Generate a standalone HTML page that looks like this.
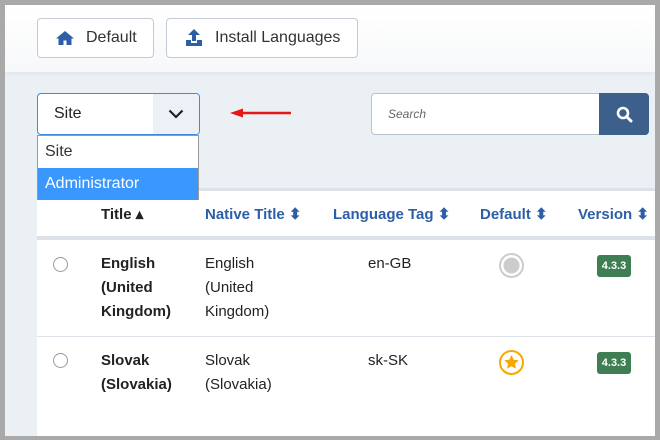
<!DOCTYPE html>
<html><head><style>
*{box-sizing:border-box;margin:0;padding:0}
body{width:660px;height:440px;background:#a9a9a9;font-family:"Liberation Sans",sans-serif;position:relative;overflow:hidden}
.frame{position:absolute;left:5px;top:5px;width:650px;height:431px;background:#ebf0f5;overflow:hidden}
.top{position:absolute;left:0;top:0;width:650px;height:67px;background:linear-gradient(#fff,#f7f8fa);box-shadow:0 2px 4px rgba(0,0,0,.04)}
.btn{position:absolute;top:13px;height:40px;border:1px solid #c3cad4;border-radius:4px;background:#fff;color:#333;font-size:16px;line-height:38px}
.sel{position:absolute;left:32px;top:88px;width:163px;height:42px;border:1px solid #3d8be0;border-radius:4px;background:#fff;font-size:16px;line-height:40px;padding-left:16px;color:#222;overflow:hidden}
.sel .ar{position:absolute;right:0;top:0;width:46px;height:40px;background:#edf1f7}
.dd{position:absolute;left:32px;top:130px;width:162px;height:65px;border:1px solid #999;background:#fff;font-size:16px;z-index:3}
.dd div{height:32px;line-height:32px;padding-left:7px;color:#333}
.dd .hl{background:#3a97fe;color:#fff}
.search{position:absolute;left:366px;top:88px;width:229px;height:42px;border:1px solid #b8c3d2;border-radius:4px 0 0 4px;background:#fff;font-style:italic;font-size:12px;color:#666;line-height:40px;padding-left:16px}
.sbtn{position:absolute;left:594px;top:88px;width:50px;height:42px;background:#3c5f8c;border-radius:0 4px 4px 0}
.table{position:absolute;left:32px;top:183px;width:618px;height:260px;background:#fff;border-top:3px solid #dde2e8}
.th{position:absolute;top:14px;font-weight:bold;font-size:15px;color:#2c5fa8}
.hsep{position:absolute;left:0;top:45px;width:618px;height:4px;background:#dde2e8}
.rsep{position:absolute;left:0;top:145px;width:618px;height:1px;background:#dde2e8}
.td{position:absolute;font-size:15px;color:#222;line-height:24px}
.b{font-weight:bold}
.radio{position:absolute;left:16px;width:15px;height:15px;border:1px solid #999;border-radius:50%}
.badge{position:absolute;left:560px;width:34px;height:22px;background:#3f7d52;border-radius:3px;color:#fff;font-size:11px;font-weight:bold;text-align:center;line-height:22px}
</style></head><body>
<div class="frame">
<div class="top"></div>
<div class="btn" style="left:32px;width:117px;padding-left:48px">
<svg style="position:absolute;left:17px;top:11px" width="20" height="16" viewBox="0 0 20 16"><path d="M10 1L1 8.5h2.5V15h5v-4.5h3V15h5V8.5H19z" fill="#2c5fa8"/></svg>Default</div>
<div class="btn" style="left:161px;width:192px;padding-left:48px">
<svg style="position:absolute;left:18px;top:9px" width="18" height="20" viewBox="0 0 18 20"><path d="M9 1L3 7h4v6h4V7h4z M1 12h5v3h6v-3h5v6H1z" fill="#2c5fa8"/></svg>Install Languages</div>
<div class="sel">Site<div class="ar"><svg style="position:absolute;left:15px;top:15px" width="16" height="10" viewBox="0 0 16 10"><path d="M1.5 1.5L8 8l6.5-6.5" stroke="#222" stroke-width="2.2" fill="none"/></svg></div></div>
<div class="dd"><div>Site</div><div class="hl">Administrator</div></div>
<svg style="position:absolute;left:224px;top:102px" width="64" height="12" viewBox="0 0 64 12"><path d="M10 6H62" stroke="#e81616" stroke-width="2.5"/><path d="M1 6L14 1.5v9z" fill="#e81616"/></svg>
<div class="search">Search</div>
<div class="sbtn"><svg style="position:absolute;left:17px;top:13px" width="17" height="17" viewBox="0 0 17 17"><circle cx="7" cy="7" r="5" stroke="#fff" stroke-width="2.6" fill="none"/><path d="M10.5 10.5L15 15" stroke="#fff" stroke-width="3" stroke-linecap="round"/></svg></div>
<div class="table">
<div class="th" style="left:64px;color:#222">Title ▴</div>
<div class="th" style="left:168px">Native Title ⬍</div>
<div class="th" style="left:296px">Language Tag ⬍</div>
<div class="th" style="left:443px">Default ⬍</div>
<div class="th" style="left:541px">Version ⬍</div>
<div class="hsep"></div>
<div class="radio" style="top:66px"></div>
<div class="td b" style="left:64px;top:61px">English<br>(United<br>Kingdom)</div>
<div class="td" style="left:168px;top:61px">English<br>(United<br>Kingdom)</div>
<div class="td" style="left:331px;top:61px">en-GB</div>
<svg style="position:absolute;left:461px;top:61px" width="27" height="27"><circle cx="13.5" cy="13.5" r="11.5" stroke="#ccc" stroke-width="2" fill="none"/><circle cx="13.5" cy="13.5" r="8" fill="#ccc"/></svg>
<div class="badge" style="top:64px">4.3.3</div>
<div class="rsep"></div>
<div class="radio" style="top:162px"></div>
<div class="td b" style="left:64px;top:158px">Slovak<br>(Slovakia)</div>
<div class="td" style="left:168px;top:158px">Slovak<br>(Slovakia)</div>
<div class="td" style="left:331px;top:158px">sk-SK</div>
<svg style="position:absolute;left:461px;top:158px" width="27" height="27" viewBox="0 0 27 27"><circle cx="13.5" cy="13.5" r="11.5" stroke="#f7a800" stroke-width="2" fill="none"/><path d="M13.5 6l2.2 4.7 5 .6-3.7 3.4 1 5-4.5-2.5-4.5 2.5 1-5-3.7-3.4 5-.6z" fill="#f7a800"/></svg>
<div class="badge" style="top:161px">4.3.3</div>
</div>
</div>
</body></html>
